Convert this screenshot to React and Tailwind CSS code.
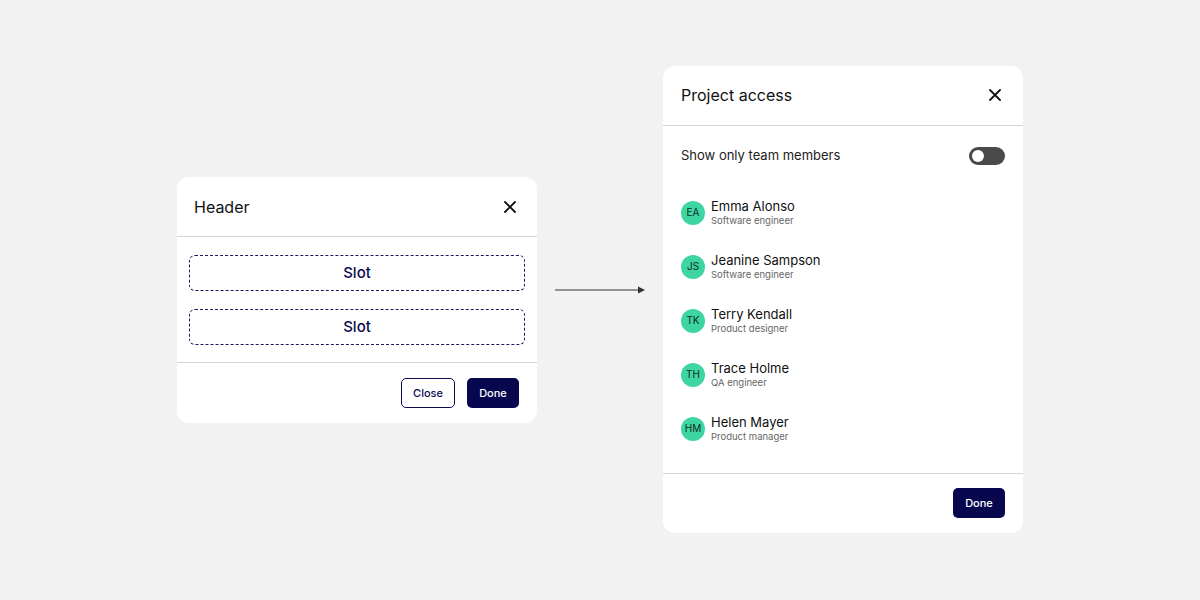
import React from 'react';

const people = [
  { initials: 'EA', name: 'Emma Alonso', role: 'Software engineer' },
  { initials: 'JS', name: 'Jeanine Sampson', role: 'Software engineer' },
  { initials: 'TK', name: 'Terry Kendall', role: 'Product designer' },
  { initials: 'TH', name: 'Trace Holme', role: 'QA engineer' },
  { initials: 'HM', name: 'Helen Mayer', role: 'Product manager' },
];

function CloseIcon() {
  return (
    <svg width="12" height="12" viewBox="0 0 12 12" fill="none">
      <path d="M1 1L11 11M11 1L1 11" stroke="#111" strokeWidth="1.8" strokeLinecap="round" />
    </svg>
  );
}

function Arrow() {
  return (
    <svg width="90" height="10" viewBox="0 0 90 10" fill="none" className="mb-[20px]">
      <line x1="0" y1="5" x2="84" y2="5" stroke="#333" strokeWidth="1.2" />
      <path d="M83 1.5L90 5L83 8.5Z" fill="#333" />
    </svg>
  );
}

export default function App() {
  return (
    <div
      className="w-[1200px] h-[600px] bg-[#f2f2f2] flex items-center justify-center gap-[18px]"
      style={{ fontFamily: 'Inter, "Noto Sans", sans-serif' }}
    >
      {/* Template dialog */}
      <div className="w-[360px] bg-white rounded-[12px] flex flex-col">
        <div className="h-[60px] flex items-center justify-between pl-[17px] pr-[21px] border-b border-[#d4d4d4]">
          <span className="text-[16px] text-[#111]">Header</span>
          <CloseIcon />
        </div>
        <div className="flex flex-col gap-[18px] px-[12px] pt-[18px] pb-[17px] border-b border-[#d4d4d4]">
          <div className="h-[36px] border border-dashed border-[#1a1a5c] rounded-[6px] flex items-center justify-center text-[15px] font-medium text-[#0b0b50]">
            Slot
          </div>
          <div className="h-[36px] border border-dashed border-[#1a1a5c] rounded-[6px] flex items-center justify-center text-[15px] font-medium text-[#0b0b50]">
            Slot
          </div>
        </div>
        <div className="h-[60px] flex items-center justify-end gap-[12px] pr-[18px]">
          <button className="h-[30px] w-[54px] rounded-[5px] border border-[#0b0b50] text-[11px] font-medium text-[#0b0b50]">
            Close
          </button>
          <button className="h-[30px] w-[52px] rounded-[5px] bg-[#07074f] text-[11px] font-medium text-white">
            Done
          </button>
        </div>
      </div>

      <Arrow />

      {/* Project access dialog */}
      <div className="w-[360px] bg-white rounded-[12px] flex flex-col mb-[2px]">
        <div className="h-[60px] flex items-center justify-between pl-[18px] pr-[22px] border-b border-[#d4d4d4]">
          <span className="text-[16px] text-[#111]">Project access</span>
          <CloseIcon />
        </div>
        <div className="flex flex-col px-[18px] pt-[21px] pb-[17px] border-b border-[#d4d4d4]">
          <div className="h-[18px] flex items-center justify-between mb-[21px]">
            <span className="text-[13px] text-[#222]">Show only team members</span>
            <div className="w-[36px] h-[18px] rounded-full bg-[#4a4a4a] flex items-center pl-[3px]">
              <div className="w-[12px] h-[12px] rounded-full bg-white" />
            </div>
          </div>
          {people.map((p) => (
            <div key={p.initials} className="h-[54px] flex items-center gap-[6px]">
              <div className="w-[24px] h-[24px] rounded-full bg-[#3dd6a3] flex items-center justify-center text-[10px] text-[#0f2a22]">
                {p.initials}
              </div>
              <div className="flex flex-col">
                <span className="text-[13px] leading-[16px] text-[#111]">{p.name}</span>
                <span className="text-[9.5px] leading-[14px] text-[#666]">{p.role}</span>
              </div>
            </div>
          ))}
        </div>
        <div className="h-[59px] flex items-center justify-end pr-[18px]">
          <button className="h-[30px] w-[52px] rounded-[5px] bg-[#07074f] text-[11px] font-medium text-white">
            Done
          </button>
        </div>
      </div>
    </div>
  );
}
